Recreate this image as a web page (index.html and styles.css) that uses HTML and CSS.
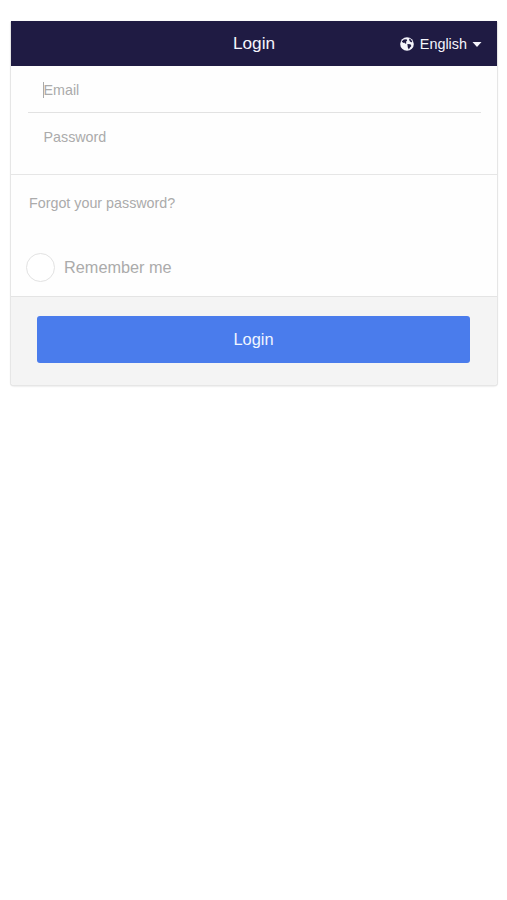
FILE: index.html
```html
<!DOCTYPE html>
<html lang="en">
<head>
<meta charset="utf-8">
<title>Login</title>
<link rel="stylesheet" href="styles.css">
</head>
<body>
<main class="card">
  <header class="header">
    <h1 class="title">Login</h1>
    <div class="language">
      <svg class="globe" viewBox="0 0 14 14" aria-hidden="true">
        <circle cx="7" cy="7" r="6.8" fill="#f5f5fc"/>
        <path d="M1.7 4.4 3.8 2.4 6.5 2.3 7.2 3.6 6 4.8 6.4 6.2 5.2 6.7 4.3 5.4 3.3 5.9ZM9 1.6 11 2.4 12.4 5 11.2 5.2 10 4.6 9.4 3.4ZM7.4 7 10.4 7.2 11.4 8.9 9.8 10.8 8.9 12.4 7.8 10.6Z" fill="#1f1b43"/>
      </svg>
      <span>English</span>
      <svg class="caret" viewBox="0 0 10 5" aria-hidden="true"><path d="M.5 0h9L5 5Z" fill="#f5f5fc"/></svg>
    </div>
  </header>
  <section class="fields">
    <div class="field email"><span class="cursor"></span>Email</div>
    <div class="field password">Password</div>
  </section>
  <section class="options">
    <a class="forgot">Forgot your password?</a>
    <label class="remember"><span class="radio"></span><span>Remember me</span></label>
  </section>
  <footer class="footer"><button class="submit">Login</button></footer>
</main>
</body>
</html>
```
FILE: styles.css
```css
* { box-sizing: border-box; }
body {
  min-height: 100vh;
  margin: 0;
  padding: 21px 10px 0 11px;
  background: #fff;
  color: #ababab;
  font-family: "Liberation Sans", Arial, sans-serif;
}
.card {
  height: 364px;
  background: #fefefe;
  border-radius: 0 0 3px 3px;
  box-shadow: -1px 1px 0 #e6e6e6, 1px 1px 0 #e6e6e6, 0 1px 2px #c8c8c8;
}
.header {
  height: 45px;
  display: grid;
  grid-template-columns: 1fr auto 1fr;
  align-items: center;
  padding: 0 16px;
  background: #1f1b43;
  color: #f5f5fc;
}
.title {
  grid-column: 2;
  margin: 0;
  font-size: 17.2px;
  font-weight: 400;
}
.language {
  display: flex;
  align-items: center;
  justify-content: flex-end;
  padding-top: 1px;
  font-size: 14.4px;
}
.globe { width: 14px; height: 14px; margin-right: 6px; }
.caret { width: 10px; height: 5px; margin-left: 5px; margin-right: -1px; }
.fields {
  height: 109px;
  padding: 0 16px 0 17px;
  border-bottom: 1px solid #e6e6e6;
}
.field {
  display: flex;
  align-items: center;
  height: 47px;
  padding-left: 15.5px;
  font-size: 14.3px;
}
.email { border-bottom: 1px solid #e2e2e2; padding-top: 2px; }
.cursor { width: 1px; height: 16px; margin: 0 -0.4px 0 -0.6px; background: #aaa; }
.options {
  height: 122px;
  padding: 19px 16px 0 15px;
  border-bottom: 1px solid #e4e4e4;
}
.forgot {
  display: block;
  height: 59px;
  padding-left: 3px;
  font-size: 14.3px;
  line-height: 19px;
}
.remember {
  display: flex;
  align-items: center;
  gap: 9px;
  font-size: 16.3px;
}
.radio {
  width: 29px;
  height: 29px;
  border: 1px solid #e2e2e2;
  border-radius: 50%;
  background: #fff;
}
.footer {
  height: 88px;
  padding: 19px 27px 0 26px;
  border-radius: 0 0 3px 3px;
  background: #f4f4f4;
}
.submit {
  display: block;
  width: 100%;
  height: 47px;
  padding: 0;
  border: 0;
  border-radius: 3px;
  background: #4a7cec;
  color: #f0f5ff;
  font: 16.4px "Liberation Sans", Arial, sans-serif;
}
```
